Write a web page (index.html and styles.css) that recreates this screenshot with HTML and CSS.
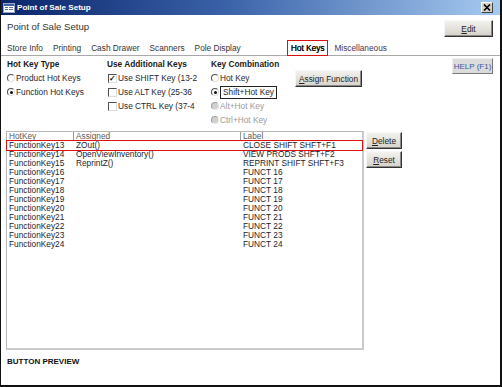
FILE: index.html
```html
<!DOCTYPE html>
<html lang="en">
<head>
    <meta charset="UTF-8">
    <meta name="viewport" content="width=device-width, initial-scale=1.0">
    <title>Point of Sale Setup</title>
    <link rel="stylesheet" href="styles.css">
</head>
<body>
    <div class="window">
        <div class="titlebar">
            <svg class="app-icon" width="12" height="10" viewBox="0 0 12 10">
                <rect x="0.5" y="0.5" width="11" height="9" fill="#fff" stroke="#9aa6c0"/>
                <rect x="1" y="1" width="10" height="2" fill="#3b5fa8"/>
                <rect x="2" y="4" width="3" height="1" fill="#5a6f9a"/>
                <rect x="6" y="4" width="4" height="1" fill="#5a6f9a"/>
                <rect x="2" y="6" width="3" height="1" fill="#5a6f9a"/>
                <rect x="6" y="6" width="4" height="1" fill="#5a6f9a"/>
            </svg>
            <span class="title">Point of Sale Setup</span>
            <span class="close">
                <svg width="8" height="7" viewBox="0 0 8 7">
                    <path d="M1 0.5 L7 6.5 M7 0.5 L1 6.5" stroke="#000" stroke-width="1.6"/>
                </svg>
            </span>
        </div>

        <div class="content">
            <div class="head">
                <h1>Point of Sale Setup</h1>
                <button class="btn edit"><u>E</u>dit</button>
            </div>

            <div class="tabs">
                <span class="tab">Store Info</span>
                <span class="tab">Printing</span>
                <span class="tab">Cash Drawer</span>
                <span class="tab">Scanners</span>
                <span class="tab">Pole Display</span>
                <span class="tab tab-active">Hot Keys</span>
                <span class="tab tab-misc">Miscellaneous</span>
            </div>

            <div class="options">
                <div class="opt-col col-type">
                    <div class="opt-head">Hot Key Type</div>
                    <div class="opt"><span class="radio"></span>Product Hot Keys</div>
                    <div class="opt"><span class="radio on"></span>Function Hot Keys</div>
                </div>
                <div class="opt-col col-keys">
                    <div class="opt-head">Use Additional Keys</div>
                    <div class="opt"><span class="check on">&#10003;</span>Use SHIFT Key (13-2</div>
                    <div class="opt"><span class="check"></span>Use ALT Key (25-36</div>
                    <div class="opt"><span class="check"></span>Use CTRL Key (37-4</div>
                </div>
                <div class="opt-col col-combo">
                    <div class="opt-head">Key Combination</div>
                    <div class="opt"><span class="radio"></span>Hot Key</div>
                    <div class="opt"><span class="radio on"></span><span class="focus">Shift+Hot Key</span></div>
                    <div class="opt disabled"><span class="radio"></span>Alt+Hot Key</div>
                    <div class="opt disabled"><span class="radio"></span>Ctrl+Hot Key</div>
                </div>
                <div class="opt-col col-assign">
                    <button class="btn assign"><u>A</u>ssign Function</button>
                </div>
                <button class="help">HELP (F1)</button>
            </div>

            <div class="grid-area">
                <div class="grid">
                    <div class="grid-row grid-head">
                        <span class="c1">HotKey</span>
                        <span class="c2">Assigned</span>
                        <span class="c3">Label</span>
                    </div>
                    <div class="grid-row selected">
                        <span class="c1">FunctionKey13</span><span class="c2">ZOut()</span><span class="c3">CLOSE SHIFT SHFT+F1</span>
                    </div>
                    <div class="grid-row">
                        <span class="c1">FunctionKey14</span><span class="c2">OpenViewInventory()</span><span class="c3">VIEW PRODS SHFT+F2</span>
                    </div>
                    <div class="grid-row">
                        <span class="c1">FunctionKey15</span><span class="c2">ReprintZ()</span><span class="c3">REPRINT SHIFT SHFT+F3</span>
                    </div>
                    <div class="grid-row">
                        <span class="c1">FunctionKey16</span><span class="c2"></span><span class="c3">FUNCT 16</span>
                    </div>
                    <div class="grid-row">
                        <span class="c1">FunctionKey17</span><span class="c2"></span><span class="c3">FUNCT 17</span>
                    </div>
                    <div class="grid-row">
                        <span class="c1">FunctionKey18</span><span class="c2"></span><span class="c3">FUNCT 18</span>
                    </div>
                    <div class="grid-row">
                        <span class="c1">FunctionKey19</span><span class="c2"></span><span class="c3">FUNCT 19</span>
                    </div>
                    <div class="grid-row">
                        <span class="c1">FunctionKey20</span><span class="c2"></span><span class="c3">FUNCT 20</span>
                    </div>
                    <div class="grid-row">
                        <span class="c1">FunctionKey21</span><span class="c2"></span><span class="c3">FUNCT 21</span>
                    </div>
                    <div class="grid-row">
                        <span class="c1">FunctionKey22</span><span class="c2"></span><span class="c3">FUNCT 22</span>
                    </div>
                    <div class="grid-row">
                        <span class="c1">FunctionKey23</span><span class="c2"></span><span class="c3">FUNCT 23</span>
                    </div>
                    <div class="grid-row">
                        <span class="c1">FunctionKey24</span><span class="c2"></span><span class="c3">FUNCT 24</span>
                    </div>
                </div>
                <div class="side-btns">
                    <button class="btn side"><u>D</u>elete</button>
                    <button class="btn side"><u>R</u>eset</button>
                </div>
            </div>

            <div class="preview">BUTTON PREVIEW</div>
        </div>
    </div>
</body>
</html>
```

FILE: styles.css
```css
* {
    box-sizing: border-box;
}
body {
    margin: 0;
    background-color: #fff;
    font-family: "Liberation Sans", Arial, sans-serif;
    font-size: 8.3px;
    color: #222;
}
.window {
    width: 502px;
    height: 387px;
    border-left: 1px solid #111;
    border-right: 2px solid #111;
    border-bottom: 2px solid #111;
    display: flex;
    flex-direction: column;
}

/* title bar */
.titlebar {
    height: 15px;
    display: flex;
    align-items: center;
    background: linear-gradient(90deg, #0a246a 0%, #3a62a8 45%, #a6caf0 100%);
    padding-left: 2px;
}
.app-icon {
    margin-right: 2px;
}
.title {
    color: #fff;
    font-weight: bold;
    font-size: 8.1px;
    flex: 1;
}
.close {
    width: 12px;
    height: 11px;
    margin-right: 7px;
    background-color: #d4d0c8;
    border: 1px solid;
    border-color: #fff #404040 #404040 #fff;
    display: flex;
    align-items: center;
    justify-content: center;
}

.content {
    flex: 1;
    padding: 0 7px 0 6px;
    display: flex;
    flex-direction: column;
}

/* header */
.head {
    height: 25px;
    padding-top: 5px;
    display: flex;
    justify-content: space-between;
    align-items: flex-start;
}
h1 {
    margin: 0;
    font-size: 9.6px;
    font-weight: normal;
    line-height: 13px;
    color: #333;
}
.btn {
    font-family: inherit;
    font-size: 8.3px;
    color: #222;
    padding: 0;
    white-space: nowrap;
    background: linear-gradient(#f3f2ee, #d6d2ca);
    border: 1px solid;
    border-color: #f8f8f8 #333 #333 #f8f8f8;
    box-shadow: inset -1px -1px 0 #8a8a8a;
    cursor: pointer;
}
.edit {
    width: 49px;
    height: 17px;
}

/* tabs */
.tabs {
    height: 16px;
    margin: 0 -7px 0 -6px;
    padding-left: 6px;
    border-bottom: 1px solid #a9a9a9;
    display: flex;
    align-items: center;
    gap: 10px;
    color: #333;
    line-height: 14px;
}
.tab-active {
    margin-left: 36px;
    border: 1px solid #d81010;
    padding: 0 3px;
    color: #000;
    text-shadow: 0.3px 0 0 #000;
}
.tab-misc {
    margin-left: -4px;
    color: #4a3458;
}

/* option groups */
.options {
    height: 75px;
    padding-top: 1px;
    display: flex;
    align-items: flex-start;
}
.opt-col {
    line-height: 14px;
}
.col-type {
    width: 100px;
}
.col-keys {
    width: 104px;
}
.col-combo {
    width: 84px;
}
.opt-head {
    font-weight: bold;
    color: #1a1a1a;
}
.opt {
    display: flex;
    align-items: center;
    height: 14px;
    white-space: nowrap;
    color: #1e1e2e;
}
.radio {
    width: 8px;
    height: 8px;
    margin-right: 1px;
    border-radius: 50%;
    border: 1px solid;
    border-color: #505050 #e0e0e0 #e0e0e0 #505050;
    background-color: #fff;
    display: flex;
    align-items: center;
    justify-content: center;
}
.radio.on::after {
    content: "";
    width: 3px;
    height: 3px;
    border-radius: 50%;
    background-color: #111;
}
.disabled {
    color: #9a9a9a;
}
.disabled .radio {
    background-color: #d0d0d0;
    border-color: #a0a0a0 #e6e6e6 #e6e6e6 #a0a0a0;
}
.check {
    width: 9px;
    height: 9px;
    margin: 0 1px 0 1px;
    border: 1px solid;
    border-color: #505050 #dcdcdc #dcdcdc #505050;
    font-size: 8px;
    line-height: 7px;
    text-align: center;
    font-weight: bold;
    color: #111;
}
.focus {
    border: 1px solid #222;
    padding: 0 2px;
    line-height: 11px;
}
.col-assign {
    padding-top: 13px;
}
.assign {
    width: 67px;
    height: 17px;
}
.help {
    margin-left: auto;
    margin-top: 1px;
    width: 41px;
    height: 16px;
    padding: 0;
    white-space: nowrap;
    font-family: inherit;
    font-size: 8px;
    color: #3b5a9c;
    background-color: #dcdcdc;
    border: 1px solid;
    border-color: #eee #7a7a7a #7a7a7a #eee;
}

/* hot key grid */
.grid-area {
    display: flex;
    align-items: flex-start;
    margin-left: -1px;
}
.grid {
    width: 358px;
    height: 219px;
    border: 1px solid #b8b8b8;
    border-width: 1px 2px 2px 1px;
    border-color: #b8b8b8 #cacaca #cacaca #b8b8b8;
}
.grid-row {
    display: flex;
    height: 9px;
    line-height: 9px;
    white-space: nowrap;
    color: #1c1c2c;
}
.grid-row span {
    padding-left: 2px;
    overflow: hidden;
}
.c1 {
    width: 67px;
    border-right: 1px solid transparent;
}
.c2 {
    width: 167px;
    border-right: 1px solid transparent;
}
.c3 {
    flex: 1;
}
.grid-head {
    color: #5a5a5a;
}
.grid-head .c1,
.grid-head .c2 {
    border-right-color: #9a9a9a;
}
.selected {
    outline: 1px solid #e01010;
}
.side-btns {
    margin-left: 2px;
    padding-top: 1px;
    display: flex;
    flex-direction: column;
    gap: 2px;
}
.side {
    width: 36px;
    height: 17px;
}

.preview {
    margin-top: 6px;
    font-weight: bold;
    font-size: 8px;
    line-height: 11px;
    color: #111;
}
```
